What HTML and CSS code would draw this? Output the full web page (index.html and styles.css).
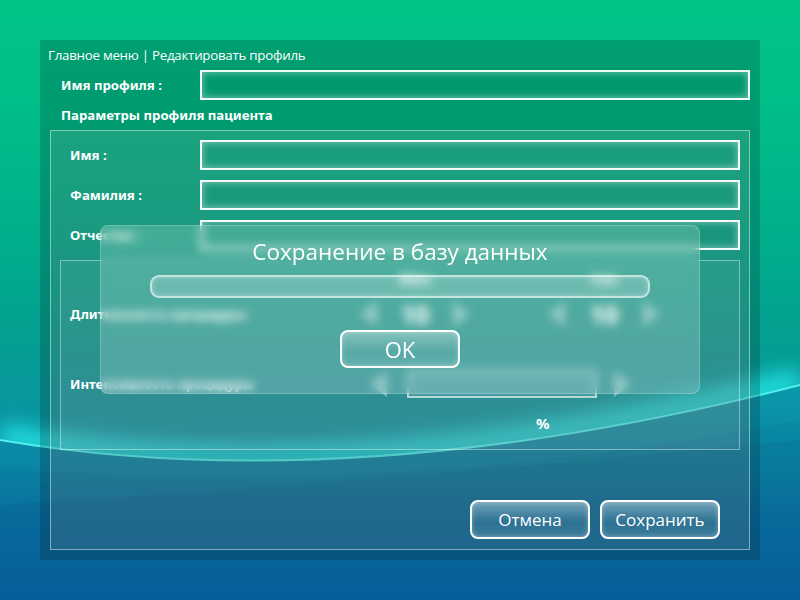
FILE: index.html
```html
<!DOCTYPE html>
<html lang="ru">
<head>
<meta charset="utf-8">
<title>Редактировать профиль</title>
<link rel="stylesheet" href="styles.css">
</head>
<body>
<div class="panel">
  <div class="crumb">Главное меню | Редактировать профиль</div>
  <div class="row top-row">
    <span class="lbl lbl-top">Имя профиля :</span>
    <div class="field field-top"></div>
  </div>
  <div class="section-title">Параметры профиля пациента</div>
  <div class="group">
    <div class="row">
      <span class="lbl lbl-in">Имя :</span>
      <div class="field field-in"></div>
    </div>
    <div class="row gap-row">
      <span class="lbl lbl-in">Фамилия :</span>
      <div class="field field-in"></div>
    </div>
    <div class="row gap-row">
      <span class="lbl lbl-in">Отчество :</span>
      <div class="field field-in"></div>
    </div>
    <div class="subbox">
      <div class="heads">
        <span class="head head-1">Мин</span>
        <span class="head head-2">Сек</span>
      </div>
      <div class="srow srow-1">
        <span class="lbl slbl">Длительность процедуры</span>
        <div class="spin spin-1">
          <span class="tri tri-l"></span>
          <span class="num">10</span>
          <span class="tri tri-r"></span>
        </div>
        <div class="spin spin-2">
          <span class="tri tri-l"></span>
          <span class="num">10</span>
          <span class="tri tri-r"></span>
        </div>
      </div>
      <div class="srow srow-2">
        <span class="lbl slbl">Интенсивность процедуры</span>
        <span class="tri tri-l tri-int-l"></span>
        <div class="int-box"></div>
        <span class="tri tri-r tri-int-r"></span>
      </div>
      <div class="srow srow-3">
        <span class="pct">%</span>
      </div>
    </div>
    <div class="actions">
      <button class="btn">Отмена</button>
      <button class="btn">Сохранить</button>
    </div>
  </div>

  <div class="dialog">
    <div class="dlg-title">Сохранение в базу данных</div>
    <div class="progress"></div>
    <button class="btn-ok">OK</button>
  </div>
</div>
</body>
</html>
```
FILE: styles.css
```css
html, body {
  margin: 0;
  padding: 0;
}
body {
  width: 800px;
  height: 600px;
  overflow: hidden;
  font-family: "Open Sans", "Noto Sans", sans-serif;
  color: #fff;
  background:
    url("data:image/svg+xml,%3Csvg xmlns='http://www.w3.org/2000/svg' width='800' height='600'%3E%3Cdefs%3E%3ClinearGradient id='g' x1='0' y1='380' x2='0' y2='600' gradientUnits='userSpaceOnUse'%3E%3Cstop offset='0' stop-color='%230a9aaa'/%3E%3Cstop offset='0.45' stop-color='%230a82a5'/%3E%3Cstop offset='0.62' stop-color='%230a73a4'/%3E%3Cstop offset='1' stop-color='%230866a0'/%3E%3C/linearGradient%3E%3Cfilter id='b' x='-20%25' y='-50%25' width='140%25' height='200%25'%3E%3CfeGaussianBlur stdDeviation='10'/%3E%3C/filter%3E%3CclipPath id='c'%3E%3Cpath d='M0 0H800V385Q350 500 0 440Z'/%3E%3C/clipPath%3E%3C/defs%3E%3Cg clip-path='url(%23c)'%3E%3Cpath d='M0 436Q350 496 800 381' stroke='%2320e0e0' stroke-width='24' fill='none' filter='url(%23b)'/%3E%3C/g%3E%3Cpath d='M0 440Q350 500 800 385V600H0Z' fill='url(%23g)'/%3E%3Cpath d='M0 468Q400 500 800 420V600H0Z' fill='%23003060' fill-opacity='0.06'/%3E%3Cpath d='M0 505Q400 480 800 440V600H0Z' fill='%23003060' fill-opacity='0.07'/%3E%3Cpath d='M0 440Q350 500 800 385' stroke='%2350f0f0' stroke-width='2' fill='none'/%3E%3C/svg%3E") no-repeat,
    linear-gradient(180deg, #00c488 0%, #00bd89 20%, #00ae8b 40%, #04a090 55%, #0a94a0 70%, #0a70a4 85%, #0866a0 100%);
}

.panel {
  position: relative;
  margin: 40px;
  width: 720px;
  height: 520px;
  box-sizing: border-box;
  padding-top: 6px;
  background: rgba(0, 20, 20, 0.2);
  display: flex;
  flex-direction: column;
}

.crumb {
  padding-left: 8px;
  height: 18px;
  line-height: 18px;
  font-size: 13.3px;
  letter-spacing: -0.25px;
}

.row {
  display: flex;
  align-items: center;
  height: 30px;
}
.top-row {
  margin-top: 6px;
}
.lbl {
  font-family: "Noto Sans", "Open Sans", sans-serif;
  font-weight: 700;
  font-size: 13.2px;
}
.lbl-top {
  width: 139px;
  padding-left: 21px;
}
.field {
  height: 30px;
  box-sizing: border-box;
  border: 2px solid rgba(255, 255, 255, 0.95);
  box-shadow: inset 0 0 7px 1px rgba(255, 255, 255, 0.4);
  background: rgba(0, 40, 30, 0.03);
}
.field-top {
  width: 550px;
}

.section-title {
  height: 30px;
  line-height: 30px;
  padding-left: 21px;
  font-family: "Noto Sans", "Open Sans", sans-serif;
  font-weight: 700;
  font-size: 13.2px;
}

.group {
  margin: 0 10px;
  height: 420px;
  box-sizing: border-box;
  border: 1px solid rgba(255, 255, 255, 0.45);
  background: rgba(255, 255, 255, 0.1);
  padding: 9px 9px 0 0;
  display: flex;
  flex-direction: column;
}
.lbl-in {
  width: 130px;
  padding-left: 19px;
}
.field-in {
  width: 540px;
}
.gap-row {
  margin-top: 10px;
}

.subbox {
  margin: 10px 0 0 9px;
  width: 680px;
  height: 190px;
  box-sizing: border-box;
  border: 1px solid rgba(255, 255, 255, 0.4);
  background: rgba(255, 255, 255, 0.06);
  display: flex;
  flex-direction: column;
}
.heads {
  display: flex;
  height: 16px;
  margin-top: 10px;
  font-family: "Noto Sans", sans-serif;
  font-weight: 700;
  font-size: 14px;
  line-height: 16px;
}
.head {
  text-align: center;
}
.head-1 {
  margin-left: 299px;
  width: 110px;
}
.head-2 {
  margin-left: 78px;
  width: 112px;
}
.srow {
  display: flex;
  align-items: center;
  height: 32px;
}
.srow-1 {
  margin-top: 11px;
}
.srow-2 {
  margin-top: 38px;
}
.srow-3 {
  margin-top: 13px;
  height: 20px;
}
.slbl {
  width: 290px;
  padding-left: 9px;
  flex: none;
}
.spin {
  display: flex;
  align-items: center;
  justify-content: space-between;
  flex: none;
}
.spin-1 {
  width: 110px;
}
.spin-2 {
  width: 112px;
  margin-left: 78px;
}
.num {
  font-family: "Noto Sans", sans-serif;
  font-weight: 700;
  font-size: 25px;
  line-height: 30px;
  color: #fff;
}
.tri {
  width: 0;
  height: 0;
  border-top: 13px solid transparent;
  border-bottom: 13px solid transparent;
  flex: none;
}
.tri-l {
  border-right: 17px solid rgba(255, 255, 255, 0.4);
}
.tri-r {
  border-left: 17px solid rgba(255, 255, 255, 0.4);
}
.tri-int-l {
  margin-left: 10px;
}
.int-box {
  margin-left: 20px;
  width: 190px;
  height: 28px;
  box-sizing: border-box;
  border: 2px solid rgba(255, 255, 255, 0.6);
  background: rgba(255, 255, 255, 0.12);
  flex: none;
}
.tri-int-r {
  margin-left: 17px;
}
.pct {
  margin-left: 475px;
  font-family: "Noto Sans", sans-serif;
  font-weight: 700;
  font-size: 15px;
}

.actions {
  margin-top: 50px;
  display: flex;
  justify-content: flex-end;
  gap: 10px;
  padding-right: 20px;
}
.btn {
  width: 120px;
  height: 39px;
  box-sizing: border-box;
  border: 2px solid #fff;
  border-radius: 8px;
  background: linear-gradient(180deg, rgba(255, 255, 255, 0.38) 0%, rgba(255, 255, 255, 0.12) 45%, rgba(255, 255, 255, 0.06) 60%, rgba(255, 255, 255, 0.14) 100%);
  box-shadow: inset 0 0 5px rgba(255, 255, 255, 0.35);
  color: #fff;
  font-family: "Open Sans", sans-serif;
  font-size: 17px;
  padding: 0;
}

.dialog {
  position: absolute;
  left: 60px;
  top: 185px;
  width: 600px;
  height: 169px;
  box-sizing: border-box;
  border-radius: 8px;
  border: 1px solid rgba(255, 255, 255, 0.22);
  background: rgba(255, 255, 255, 0.18);
  -webkit-backdrop-filter: blur(5px);
  backdrop-filter: blur(5px);
  display: flex;
  flex-direction: column;
  align-items: center;
}
.dlg-title {
  margin-top: 12px;
  height: 27px;
  line-height: 27px;
  font-size: 22.5px;
}
.progress {
  margin-top: 10px;
  width: 500px;
  height: 23px;
  box-sizing: border-box;
  border: 2px solid rgba(255, 255, 255, 0.6);
  border-radius: 9px;
  background: rgba(255, 255, 255, 0.18);
  box-shadow: inset 0 0 5px rgba(255, 255, 255, 0.35);
}
.btn-ok {
  margin-top: 32px;
  width: 120px;
  height: 38px;
  box-sizing: border-box;
  border: 2px solid #fff;
  border-radius: 8px;
  background: linear-gradient(180deg, rgba(255, 255, 255, 0.3) 0%, rgba(255, 255, 255, 0.08) 50%, rgba(255, 255, 255, 0.04) 60%, rgba(255, 255, 255, 0.1) 100%);
  box-shadow: inset 0 0 5px rgba(255, 255, 255, 0.3);
  color: #fff;
  font-family: "Open Sans", sans-serif;
  font-size: 22px;
  padding: 0;
}
```
